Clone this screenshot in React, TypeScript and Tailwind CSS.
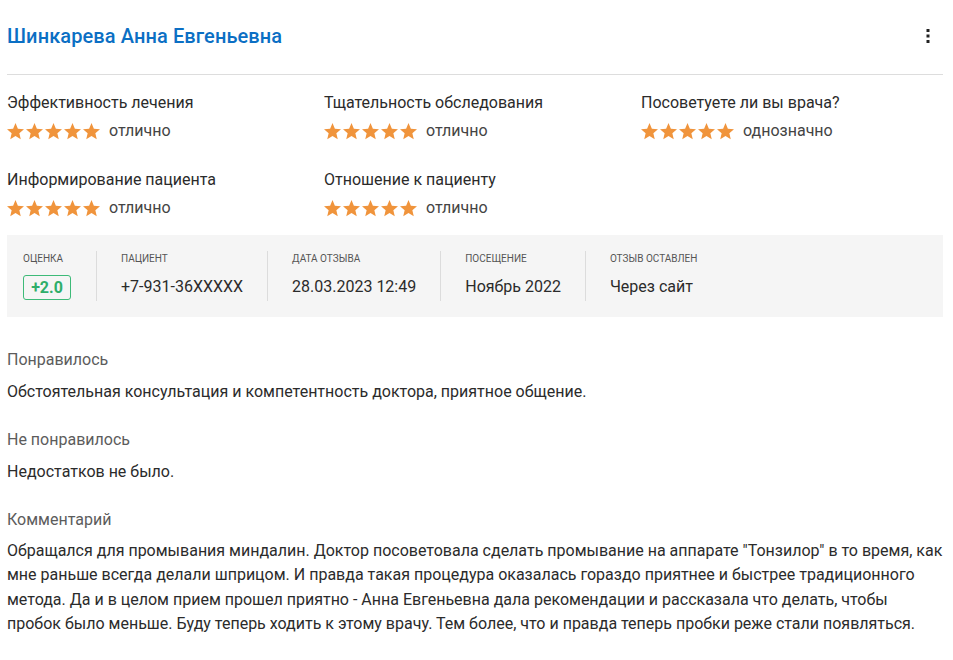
const ratings = [
  { label: "Эффективность лечения", value: "отлично" },
  { label: "Тщательность обследования", value: "отлично" },
  { label: "Посоветуете ли вы врача?", value: "однозначно" },
  { label: "Информирование пациента", value: "отлично" },
  { label: "Отношение к пациенту", value: "отлично" },
];

const meta = [
  { label: "Пациент", value: "+7-931-36XXXXX" },
  { label: "Дата отзыва", value: "28.03.2023 12:49" },
  { label: "Посещение", value: "Ноябрь 2022" },
  { label: "Отзыв оставлен", value: "Через сайт" },
];

function StarIcon() {
  return (
    <svg viewBox="2 2 20 20" className="h-[17px] w-[17px]" aria-hidden>
      <path
        d="M12 17.27L18.18 21l-1.64-7.03L22 9.24l-7.19-.61L12 2 9.19 8.63 2 9.24l5.46 4.73L5.82 21z"
        fill="#f0943c"
      />
    </svg>
  );
}

function Stars() {
  return (
    <div className="flex items-center gap-[2px]">
      {[0, 1, 2, 3, 4].map((i) => (
        <StarIcon key={i} />
      ))}
    </div>
  );
}

function Section({ title, children }: { title: string; children: React.ReactNode }) {
  return (
    <div>
      <div className="text-[16px] leading-5 text-[#5c5c5c]">{title}</div>
      <div className="mt-[10px] text-[16px] leading-6 text-[#2b2b2b]">{children}</div>
    </div>
  );
}

export default function App() {
  return (
    <div
      className="min-h-[660px] bg-white pl-[7px] pr-[10px]"
      style={{ fontFamily: "Roboto, 'Noto Sans', sans-serif" }}
    >
      <header className="flex h-[75px] items-center justify-between border-b border-[#dddddd] pb-[2px]">
        <h1 className="text-[20px] font-medium tracking-[0.1px] text-[#0b6fc4]">Шинкарева Анна Евгеньевна</h1>
        <svg viewBox="0 0 4 16" className="mr-[13px] h-[16px] w-[4px]" aria-hidden>
          <rect x="0.5" y="1" width="3" height="3" fill="#222" />
          <rect x="0.5" y="6.5" width="3" height="3" fill="#222" />
          <rect x="0.5" y="12" width="3" height="3" fill="#222" />
        </svg>
      </header>

      <div className="mt-[18px] grid grid-cols-[317px_317px_1fr] gap-y-[29px]">
        {ratings.map((r) => (
          <div key={r.label}>
            <div className="text-[16px] leading-5 text-[#2b2b2b]">{r.label}</div>
            <div className="mt-2 flex h-5 items-center">
              <Stars />
              <span className="ml-[9px] text-[16px] text-[#444]">{r.value}</span>
            </div>
          </div>
        ))}
      </div>

      <div className="mt-[17px] flex h-[82px] bg-[#f5f5f5] py-4">
        <div className="pl-4 pr-[25px]">
          <div className="mt-[2px] text-[10px] uppercase leading-3 text-[#555]">Оценка</div>
          <div className="mt-[10px] flex h-[25px] w-[48px] items-center justify-center rounded-[3px] border border-[#3dba78] text-[16px] font-bold text-[#2fae6a]">
            +2.0
          </div>
        </div>
        {meta.map((m) => (
          <div key={m.label} className="border-l border-[#dcdcdc] px-6">
            <div className="mt-[2px] text-[10px] uppercase leading-3 text-[#555]">{m.label}</div>
            <div className="mt-[10px] text-[16px] leading-6 text-[#2b2b2b]">{m.value}</div>
          </div>
        ))}
      </div>

      <div className="mt-[33px] flex flex-col gap-[26px]">
        <Section title="Понравилось">
          Обстоятельная консультация и компетентность доктора, приятное общение.
        </Section>
        <Section title="Не понравилось">Недостатков не было.</Section>
        <div>
          <div className="text-[16px] leading-5 text-[#5c5c5c]">Комментарий</div>
          <p className="mt-[9px] text-[16px] leading-[24.4px] text-[#2b2b2b]">
            Обращался для промывания миндалин. Доктор посоветовала сделать промывание на аппарате "Тонзилор" в то время, как
            мне раньше всегда делали шприцом. И правда такая процедура оказалась гораздо приятнее и быстрее традиционного
            метода. Да и в целом прием прошел приятно - Анна Евгеньевна дала рекомендации и рассказала что делать, чтобы
            пробок было меньше. Буду теперь ходить к этому врачу. Тем более, что и правда теперь пробки реже стали появляться.
          </p>
        </div>
      </div>
    </div>
  );
}
